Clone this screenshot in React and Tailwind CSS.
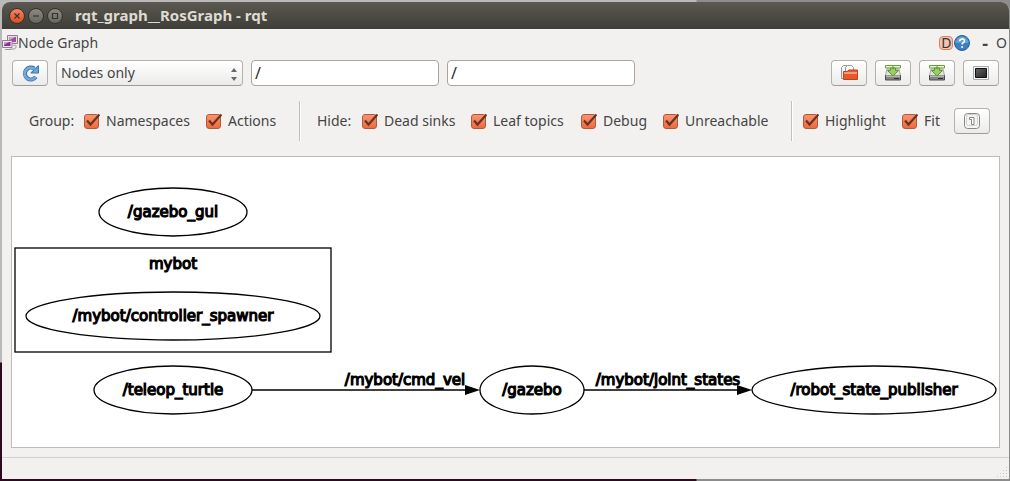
import React from "react";

const buttonStyle =
    "flex h-[26px] w-9 items-center justify-center rounded-[4px] border border-[#b5b1ac] border-b-[#9f9b96] bg-linear-to-b from-white to-[#ebebea]";

const nodes = [
    { label: "/gazebo_gui", x: 161, y: 55, rx: 74, ry: 24 },
    { label: "/mybot/controller_spawner", x: 161, y: 159, rx: 147, ry: 24 },
    { label: "/teleop_turtle", x: 161, y: 233, rx: 79, ry: 24 },
    { label: "/gazebo", x: 520, y: 233, rx: 52, ry: 24 },
    { label: "/robot_state_publisher", x: 862, y: 233, rx: 122, ry: 24 },
];

const edges = [
    { label: "/mybot/cmd_vel", from: 240, to: 468, labelX: 393 },
    { label: "/mybot/joint_states", from: 572, to: 740, labelX: 656 },
];

const WindowButton = ({ label, className, children }) => (
    <button
        type="button"
        aria-label={label}
        className={`flex size-4 items-center justify-center rounded-full border border-[#33322d] ${className}`}
    >
        <svg width="8" height="8" viewBox="0 0 8 8" fill="none" stroke="#35342f" strokeWidth="1.2">
            {children}
        </svg>
    </button>
);

const TitleBar = () => (
    <header className="flex h-[27px] items-center rounded-t-lg bg-linear-to-b from-[#5b5951] to-[#3e3d38] px-[7px]">
        <div className="flex gap-[3px]">
            <WindowButton label="Close" className="bg-linear-to-b from-[#f58462] to-[#df4a1c]">
                <path d="M1.5 1.5l5 5M6.5 1.5l-5 5" />
            </WindowButton>
            <WindowButton label="Minimize" className="bg-linear-to-b from-[#8b8981] to-[#68665f]">
                <path d="M1 4h6" />
            </WindowButton>
            <WindowButton label="Maximize" className="bg-linear-to-b from-[#8b8981] to-[#68665f]">
                <path d="M1.5 1.5h5v5h-5z" />
            </WindowButton>
        </div>
        <h1 className="ml-3 text-[15px] font-bold text-[#dfdbd2]">rqt_graph__RosGraph - rqt</h1>
    </header>
);

const NodeGraphIcon = () => (
    <svg width="16" height="16" viewBox="0 0 16 16">
        <path d="M11 10.5c3-1 4 1 2.5 2.5s-4 1.5-5 .5" fill="none" stroke="#b8b8b8" strokeWidth="1.5" />
        <path d="M5.5.5h10v8h-10z" fill="#e6dfe6" stroke="#8f7f90" />
        <path d="M7.5 2h6.500v5H7.500z" fill="#9b4d9f" />
        <path d="M8 2h5l-5 3z" fill="#d5a8d8" />
        <path d="M.5 5.500H10v7H.5z" fill="#eee8ee" stroke="#8f7f90" />
        <path d="M2 7h6.500v4H2z" fill="#8f2f95" />
        <path d="M2 7h5l-5 3z" fill="#cf98d2" />
        <path d="M3 14.500h6" stroke="#999" />
    </svg>
);

const PanelHeader = () => (
    <div className="flex h-7 items-center justify-between">
        <div className="flex items-center">
            <NodeGraphIcon />
            <h2>Node Graph</h2>
        </div>
        <div className="flex items-center pr-[2px]">
            <button
                type="button"
                className="flex size-[14px] items-center justify-center rounded-[4px] border border-[#e27f5c] bg-[#f0c4b3] text-sm leading-none text-[#333]"
            >
                D
            </button>
            <button type="button" aria-label="Help" className="ml-[1px]">
                <svg width="16" height="16" viewBox="0 0 16 16">
                    <circle cx="8" cy="8" r="7.5" fill="#3c7fc0" stroke="#255e9b" />
                    <path d="M1.5 8a6.500 6.500 0 0 1 13 0z" fill="#669fd3" />
                    <path d="M5.700 6.200c0-3 4.800-3 4.800-.2 0 1.700-2.400 1.700-2.400 3.600" fill="none" stroke="#fff" strokeWidth="1.6" />
                    <circle cx="8.100" cy="12" r="1" fill="#fff" />
                </svg>
            </button>
            <button type="button" aria-label="Minimize panel" className="ml-3 text-lg leading-none font-bold">-</button>
            <button type="button" aria-label="Float panel" className="ml-2">O</button>
        </div>
    </div>
);

const RefreshIcon = () => (
    <svg width="17" height="17" viewBox="0 0 16 16" fill="none">
        <path d="M13 11.200A5.600 5.600 0 1 1 11.500 3.300" stroke="#3a76b4" strokeWidth="4" />
        <path d="M8.500 7.500h7V.7z" fill="#6fa5d8" stroke="#3a76b4" strokeLinejoin="round" />
        <path d="M12.700 11.300A5.600 5.600 0 1 1 11.900 4" stroke="#72a9dc" strokeWidth="2.400" />
    </svg>
);

const OpenIcon = () => (
    <svg width="17" height="16" viewBox="0 0 17 16">
        <path d="M.5 2.500l2-2H6v13H.5z" fill="#f3f3f3" stroke="#999" />
        <path d="M4.500 2.500l2-2h4l2 2v9h-8z" fill="#fafafa" stroke="#999" />
        <path d="M2.500 14.500v-8h4l1-1.500h9v9.500z" fill="#e9582b" stroke="#b9431d" />
        <path d="M3 8h13" stroke="#f79b78" strokeWidth="2" />
    </svg>
);

const SaveIcon = () => (
    <svg width="16" height="16" viewBox="0 0 16 16">
        <path d="M2 4h12l1.500 6.500H.5z" fill="#e2e2e0" stroke="#aaa" />
        <path d="M.5 10.500h15v4.500H.5z" fill="#858585" stroke="#4c4c4c" />
        <path d="M1 11h14" stroke="#e8e8e8" />
        <path d="M9 13.500h5" stroke="#333" />
        <path d="M.5.5h15v2.500H.5z" fill="#e9f5dc" stroke="#67a136" />
        <path d="M5.500 3v2.500h-3L8 11l5.500-5.500h-3V3z" fill="#98cf62" stroke="#5d982c" />
        <path d="M8 1v3" stroke="#5d982c" />
    </svg>
);

const ImageIcon = () => (
    <svg width="16" height="14" viewBox="0 0 16 14">
        <defs>
            <linearGradient id="screen" x1="0" y1="0" x2="1" y2="1">
                <stop offset="0" stopColor="#666" />
                <stop offset="1" stopColor="#242424" />
            </linearGradient>
        </defs>
        <path d="M.5.5h15v13H.5z" fill="#f5f5f5" stroke="#aaa" />
        <path d="M2.500 2.500h11v9h-11z" fill="url(#screen)" stroke="#111" />
    </svg>
);

const FitIcon = () => (
    <svg width="16" height="16" viewBox="0 0 16 16" fill="none">
        <rect x=".5" y=".5" width="15" height="15" rx="3" fill="#f5f5f4" stroke="#888" />
        <rect x="2.5" y="1.5" width="11" height="11" rx="2" stroke="#d0d0d0" />
        <path d="M5.500 6.500v-2h4.500v7H7.500v-5z" fill="#fff" stroke="#888" />
    </svg>
);

const IconButton = ({ label, children }) => (
    <button type="button" aria-label={label} className={buttonStyle}>
        {children}
    </button>
);

const FilterInput = ({ label }) => (
    <input
        type="text"
        aria-label={label}
        defaultValue="/"
        className="h-[26px] w-[188px] rounded-[4px] border border-[#a9a5a0] bg-white px-[3px] text-base text-[#2c2c2c] outline-none"
    />
);

const Toolbar = () => (
    <div className="flex items-center justify-between px-[10px] pt-[3px]">
        <div className="flex gap-2">
            <IconButton label="Refresh graph"><RefreshIcon /></IconButton>
            <div className="relative">
                <select
                    aria-label="Graph type"
                    className="h-[26px] w-[187px] appearance-none rounded-[4px] border border-[#b5b1ac] border-b-[#9f9b96] bg-linear-to-b from-white to-[#ebebea] px-1 outline-none"
                >
                    <option>Nodes only</option>
                    <option>Nodes/Topics (active)</option>
                    <option>Nodes/Topics (all)</option>
                </select>
                <svg className="pointer-events-none absolute top-2 right-1.5" width="6" height="13" viewBox="0 0 6 13" fill="#686868">
                    <path d="M0 4l3-4 3 4zM0 9l3 4 3-4z" />
                </svg>
            </div>
            <FilterInput label="Namespace filter" />
            <FilterInput label="Topic filter" />
        </div>
        <div className="flex gap-2">
            <IconButton label="Load dot graph"><OpenIcon /></IconButton>
            <IconButton label="Save as dot graph"><SaveIcon /></IconButton>
            <IconButton label="Save as SVG"><SaveIcon /></IconButton>
            <IconButton label="Save as image"><ImageIcon /></IconButton>
        </div>
    </div>
);

const CheckOption = ({ label, className = "" }) => (
    <label className={`flex items-center gap-[6px] whitespace-nowrap ${className}`}>
        <span className="relative flex size-4 items-center">
            <input
                type="checkbox"
                defaultChecked
                className="peer size-[15px] appearance-none rounded-[3px] border border-[#b1593b] bg-white checked:bg-linear-to-b checked:from-[#f8946f] checked:to-[#ec6a3f]"
            />
            <svg className="pointer-events-none absolute top-0 left-0 hidden peer-checked:block" width="16" height="16" viewBox="0 0 16 16" fill="none">
                <path d="M3 7.500l3.500 4L15.500 1.500" stroke="#6b321f" strokeWidth="2.200" />
            </svg>
        </span>
        {label}
    </label>
);

const Separator = () => <div className="h-10 w-[2px] border-l border-[#c3bfbb] bg-white" />;

const Options = () => (
    <div className="flex h-[70px] items-center pl-[27px]">
        <span className="w-[55px]">Group:</span>
        <CheckOption label="Namespaces" className="w-[122px]" />
        <CheckOption label="Actions" className="w-[93px]" />
        <Separator />
        <span className="ml-4 w-[45px]">Hide:</span>
        <CheckOption label="Dead sinks" className="w-[109px]" />
        <CheckOption label="Leaf topics" className="w-[110px]" />
        <CheckOption label="Debug" className="w-[82px]" />
        <CheckOption label="Unreachable" className="w-[128px]" />
        <Separator />
        <CheckOption label="Highlight" className="ml-[10px] w-[99px]" />
        <CheckOption label="Fit" className="w-[52px]" />
        <IconButton label="Fit in view"><FitIcon /></IconButton>
    </div>
);

const GraphLabel = ({ x, y, children }) => (
    <text x={x} y={y} textAnchor="middle" fill="#000" stroke="#000" strokeWidth="1.2">
        {children}
    </text>
);

const Graph = () => (
    <main className="mx-[9px] overflow-hidden border border-[#bfbbb7] bg-white">
        <svg
            width="986"
            height="290"
            viewBox="0 0 986 290"
            className="block font-['DejaVu_Sans',sans-serif] text-[15px]"
            role="img"
            aria-label="ROS node graph"
        >
            <rect x="3" y="91" width="316" height="104" fill="none" stroke="#000" strokeWidth="1.3" />
            <GraphLabel x={161} y={112}>mybot</GraphLabel>
            {edges.map((edge) => (
                <g key={edge.label}>
                    <path d={`M${edge.from} 233H${edge.to - 14}`} stroke="#000" strokeWidth="1.3" />
                    <path d={`M${edge.to - 15} 228L${edge.to} 233l-15 5z`} />
                    <GraphLabel x={edge.labelX} y={228}>{edge.label}</GraphLabel>
                </g>
            ))}
            {nodes.map((node) => (
                <g key={node.label}>
                    <ellipse cx={node.x} cy={node.y} rx={node.rx} ry={node.ry} fill="none" stroke="#000" strokeWidth="1.3" />
                    <GraphLabel x={node.x} y={node.y + 5}>{node.label}</GraphLabel>
                </g>
            ))}
        </svg>
    </main>
);

const StatusBar = () => (
    <footer className="mt-[9px] flex h-[22px] items-end justify-end border-t border-[#d3d0cd]">
        <svg width="13" height="13" viewBox="0 0 13 13" fill="#c9c5c1">
            {[0, 1, 2, 3].map((row) =>
                Array.from({ length: row + 1 }, (_, i) => (
                    <rect key={`${row}-${i}`} x={10 - i * 3} y={1 + row * 3} width="1" height="1" />
                ))
            )}
        </svg>
    </footer>
);

const App = () => {
    return (
        <div className="min-h-screen bg-[linear-gradient(to_right,transparent_696px,#8c8c8c_697px),linear-gradient(to_bottom,#b9b9b9_362px,#2d0922_363px)] pt-[2px] pr-[1px] pb-[2px] pl-[2px] font-['Noto_Sans','Open_Sans',sans-serif] text-sm text-[#454545]">
            <div className="rounded-t-lg bg-[#f2f1f0]">
                <TitleBar />
                <PanelHeader />
                <Toolbar />
                <Options />
                <Graph />
                <StatusBar />
            </div>
        </div>
    );
};

export default App;
